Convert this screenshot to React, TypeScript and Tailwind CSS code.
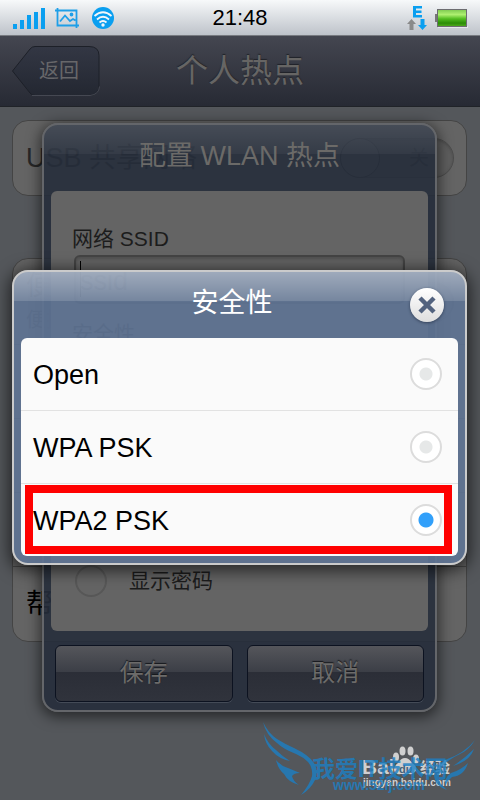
import type { ReactNode } from "react";

function StatusBar() {
  return (
    <header className="grid h-9 grid-cols-3 items-center border-b border-[#777a80] bg-linear-to-b from-[#f7f9fa] to-[#bec3ca] px-3">
      <div className="flex items-center gap-2">
        <svg className="shrink-0" width="34" height="22" viewBox="0 0 34 22" fill="#0a9ff0" aria-hidden="true">
          <path d="M1 17h4v5H1zM8 13h4v9H8zM15 8h4v14h-4zM22 5h4v17h-4zM29 1h4v21h-4z" />
        </svg>
        <svg className="shrink-0" width="26" height="22" viewBox="0 0 26 22" fill="none" stroke="#1e9fe8" strokeWidth="1.800" aria-hidden="true">
          <path d="M1 3.500h21.500V21M3.500 1v17.500H25M6 14.500l5-6 5 5.500 3-2 2.500 1.500" />
          <circle cx="17.500" cy="7.500" r="1" fill="#1e9fe8" />
        </svg>
        <svg className="ml-1 shrink-0" width="22" height="22" viewBox="0 0 22 22" aria-hidden="true">
          <circle cx="11" cy="11" r="11" fill="#0a9ff0" />
          <g fill="none" stroke="#f3f7fa" strokeWidth="1.800">
            <path d="M2.500 9Q11 1.500 19.500 9M5 12.500q6-5.500 12 0M7.500 15.500q3.500-3 7 0" />
          </g>
          <circle cx="11" cy="18" r="1.700" fill="#f3f7fa" />
        </svg>
      </div>
      <time className="text-center text-[22px] leading-9 text-black">21:48</time>
      <div className="flex items-center justify-end gap-2">
        <svg width="20" height="26" viewBox="0 0 20 26" aria-hidden="true">
          <path d="M6 1h9v2.500H9v2h5.500V8H9v2h6v2.500H6z" fill="#0a9ff0" />
          <path d="M4.500 14L9 19H6.500v6h-4v-6H0z" fill="#8a8a8a" />
          <path d="M13.500 14h4v6H20l-4.500 5L11 20h2.500z" fill="#0a9ff0" />
        </svg>
        <svg width="33" height="20" viewBox="0 0 33 20" aria-hidden="true">
          <defs>
            <linearGradient id="charge" x1="0" y1="0" x2="0" y2="1">
              <stop offset="0" stopColor="#7cc850" />
              <stop offset="0.300" stopColor="#aef070" />
              <stop offset="0.550" stopColor="#52bc20" />
              <stop offset="0.800" stopColor="#2b8c06" />
              <stop offset="1" stopColor="#52ac20" />
            </linearGradient>
          </defs>
          <path d="M0 6h3v8H0z" fill="#777" />
          <path d="M3 19h30" stroke="#fff" />
          <rect x="2.500" y="1.500" width="29" height="17" fill="url(#charge)" stroke="#6c6c70" />
        </svg>
      </div>
    </header>
  );
}

function TitleBar() {
  return (
    <div className="grid h-[71px] grid-cols-[1fr_auto_1fr] items-center border-b border-[#202328] bg-linear-to-b from-[#444650] to-[#272a34] px-3">
      <button type="button" className="relative h-[50px] w-[88px] text-left">
        <svg className="absolute inset-0" width="88" height="50" viewBox="0 0 88 50" aria-hidden="true">
          <defs>
            <linearGradient id="back" x1="0" y1="0" x2="0" y2="1">
              <stop offset="0" stopColor="#333744" />
              <stop offset="1" stopColor="#232731" />
            </linearGradient>
          </defs>
          <path d="M.5 25L18 3q2-2.500 5-2.500h54q10 0 10 9v30q0 10-10 10H23q-3 0-5-2.500z" fill="url(#back)" stroke="#1d2028" />
          <path d="M20 49.500h58q9-1 9.500-9" fill="none" stroke="#454852" />
        </svg>
        <span className="relative pl-[27px] text-[20px] text-[#67676a]">返回</span>
      </button>
      <h1 className="text-[32px] text-[#666564] [text-shadow:0_-1px_1px_#202228]">个人热点</h1>
      <span />
    </div>
  );
}

function Toggle() {
  return (
    <button
      type="button"
      role="switch"
      aria-checked="false"
      className="relative h-10 w-[114px] rounded-full border border-[#4c4c4c] bg-[#5f5f5f] pr-6 text-right text-[20px] text-[#333] shadow-[inset_0_1px_3px_#4a4a4a]"
    >
      <span className="absolute -top-px -left-px size-10 rounded-full border border-[#333] bg-[#666]" />关
    </button>
  );
}

function Row({ children, className = "" }: { children: ReactNode; className?: string }) {
  return (
    <div className={"flex items-center justify-between border-b border-[#464646] pr-3 pl-[13px] last:border-0 " + className}>
      {children}
    </div>
  );
}

function Settings() {
  return (
    <div className="flex flex-col gap-[62px] py-[13px] pr-[13px] pl-3 text-[27px] text-[#272727]">
      <section className="rounded-2xl border border-[#444] bg-[#646464]">
        <Row className="h-[74px]">
          <span>USB 共享网络</span>
          <Toggle />
        </Row>
      </section>
      <section className="rounded-2xl border border-[#444] bg-[#646464]">
        <Row className="h-[86px]">
          <div>
            <p className="leading-9">便携式</p>
            <p className="text-[20px] leading-8">便携式</p>
          </div>
          <Toggle />
        </Row>
        <Row className="h-[74px]">{null}</Row>
        <Row className="h-[74px]">{null}</Row>
        <Row className="h-[74px]">{null}</Row>
        <Row className="h-[74px]">
          <span className="text-black">帮助</span>
        </Row>
      </section>
    </div>
  );
}

const darkButton =
  "h-[57px] rounded-md border border-[#0c1220] bg-[linear-gradient(to_bottom,#55565b,#3b3e46_48%,#2b2e37_48%,#30333c)] text-[24px] text-[#6c6b6a] shadow-[0_1px_0_#444b57] [text-shadow:0_-1px_1px_#15171c]";

function ConfigDialog() {
  return (
    <div className="absolute inset-0 flex items-center pr-[43px] pb-0.5 pl-[42px]">
      <form
        role="dialog"
        aria-label="配置 WLAN 热点"
        className="w-full rounded-2xl border-2 border-[#64666a] bg-[#262d3b]/90 px-[7px] pb-2 shadow-[0_3px_14px_2px_rgba(0,0,0,0.55)] [background-image:linear-gradient(to_bottom,rgba(255,255,255,0.12),rgba(255,255,255,0.04)_29px,transparent_29px)]"
      >
        <h2 className="h-[66px] pt-2 text-center text-[27px] leading-[47px] text-[#6b6a68]">配置 WLAN 热点</h2>
        <div className="flex min-h-[440px] flex-col rounded-md bg-[#646464] px-[21px] pt-9 pb-[34px] text-[21px] text-[#1c1c1c]">
          <label htmlFor="ssid" className="leading-6">网络 SSID</label>
          <div className="relative mt-1 ml-[2px] w-[331px] max-w-full">
            <input
              id="ssid"
              placeholder="ssid"
              className="h-[49px] w-full rounded-md border-2 border-[#444] bg-[#646464] px-1 pt-1 text-[27px] shadow-[inset_0_2px_3px_#505050] placeholder:text-[#2c2c2c]"
            />
            <span className="absolute top-[6px] left-[6px] h-9 w-px bg-black" />
          </div>
          <span className="mt-[18px] leading-6">安全性</span>
          <label className="mt-auto flex items-center gap-[22px] pl-[3px]">
            <input type="checkbox" className="size-8 appearance-none rounded-full border-2 border-[#575757]" />
            显示密码
          </label>
        </div>
        <div className="grid grid-cols-2 gap-[14px] px-1 pt-[14px]">
          <button type="button" className={darkButton}>保存</button>
          <button type="button" className={darkButton}>取消</button>
        </div>
      </form>
    </div>
  );
}

const options = ["Open", "WPA PSK", "WPA2 PSK"];

function SecurityDialog() {
  return (
    <div className="absolute inset-0 flex items-center pr-[13px] pb-0.5 pl-3">
      <div
        role="dialog"
        aria-label="安全性"
        className="relative w-full rounded-2xl border-2 border-[#cbcbcb] bg-[#5e7392]/92 px-[7px] pb-[7px] shadow-[0_3px_16px_3px_rgba(0,0,0,0.6)] [background-image:linear-gradient(to_bottom,rgba(255,255,255,0.4),rgba(255,255,255,0.14)_29px,transparent_29px)]"
      >
        <div className="relative h-[66px] pt-2 pr-[15px] text-center text-[27px] leading-[47px] text-white">
          <h2>安全性</h2>
          <button
            type="button"
            aria-label="关闭"
            className="absolute top-4 right-[14px] grid size-[34px] place-items-center rounded-full bg-linear-to-b from-white to-[#dedede] shadow-[0_1px_3px_#34425a]"
          >
            <svg width="18" height="18" viewBox="0 0 18 18" fill="none" stroke="#52627e" strokeWidth="4.500" aria-hidden="true">
              <path d="M2 2l14 14M16 2L2 16" />
            </svg>
          </button>
        </div>
        <div className="rounded-md bg-[#fafafa]">
          {options.map((name) => (
            <label
              key={name}
              className="flex h-[73px] items-center justify-between border-b border-[#e2e2e2] pr-4 pl-3 text-[27px] text-black last:h-[72px] last:border-0"
            >
              <span className="pt-1">{name}</span>
              <input
                type="radio"
                name="security"
                defaultChecked={name === "WPA2 PSK"}
                className="size-8 appearance-none rounded-full border-2 border-[#dcdcdc] bg-[radial-gradient(circle,#e6e8e8_6px,#fff_7px)] checked:bg-[radial-gradient(circle,#32a0fa_7px,#fff_8px)]"
              />
            </label>
          ))}
        </div>
        <div className="pointer-events-none absolute right-[13px] bottom-[9px] left-[11px] h-[69px] border-8 border-[#ff0000]" />
      </div>
    </div>
  );
}

function Watermark() {
  return (
    <svg className="absolute right-0 bottom-0" width="220" height="80" viewBox="260 720 220 80" aria-hidden="true">
      <g fill="#d0d0d0">
        <text x="362" y="774" fontSize="21" fontWeight="700">Bai</text>
        <ellipse cx="396" cy="757" rx="3" ry="4.500" />
        <ellipse cx="402.500" cy="751" rx="3" ry="4.500" />
        <ellipse cx="410.500" cy="751" rx="3" ry="4.500" />
        <ellipse cx="416" cy="759" rx="3" ry="4.500" />
        <path d="M405 758q4 0 7 5 5 3 4 7-2 5-7 4h-8q-6 1-7-4 0-4 4-7 3-5 7-5z" />
        <text x="420" y="773" fontSize="15" fontWeight="700">经验</text>
        <text x="363" y="786" fontSize="10" fontWeight="700">jingyan.baidu.com</text>
      </g>
      <text x="399" y="773" fontSize="11" fontWeight="700" fill="#45627a">du</text>
      <g fill="#1c7fc4" opacity="0.800">
        <path d="M263 722Q268 733 277 739Q285 744 294 748Q309 755 314 763Q319 771 315 780Q311 789 301 795Q310 784 312 776Q313 768 308 762Q303 757 296 754Q283 749 277 743Q266 735 263 722z" />
        <path d="M264 734Q268 744 276 750Q282 756 290 761Q279 759 272 751Q265 744 264 734z" />
        <path d="M276 760Q281 766 288 768Q293 770 300 773Q294 773 292 776Q293 781 299 785Q288 782 284 774Q278 769 276 760z" />
        <path d="M475 740Q469 750 460 754Q446 761 442 767Q437 775 440 783L447 790Q435 786 434 776Q435 767 445 760Q465 753 475 740z" />
        <path d="M474 749Q470 761 453 766Q465 758 474 749z" />
        <path d="M468 763Q464 776 452 777Q447 781 445 786Q444 778 451 773Q461 770 468 763z" />
        <text x="312" y="777" fontSize="23" fontWeight="700">我爱IT技术网</text>
        <text x="333" y="790" fontSize="14" fontWeight="700">www.52ij.com</text>
      </g>
    </svg>
  );
}

export default function App() {
  return (
    <div className="flex min-h-screen flex-col overflow-hidden bg-[#54575b] font-['Liberation_Sans','Noto_Sans_CJK_SC',sans-serif]">
      <StatusBar />
      <main className="relative flex-1">
        <TitleBar />
        <Settings />
        <ConfigDialog />
        <SecurityDialog />
        <Watermark />
      </main>
    </div>
  );
}
